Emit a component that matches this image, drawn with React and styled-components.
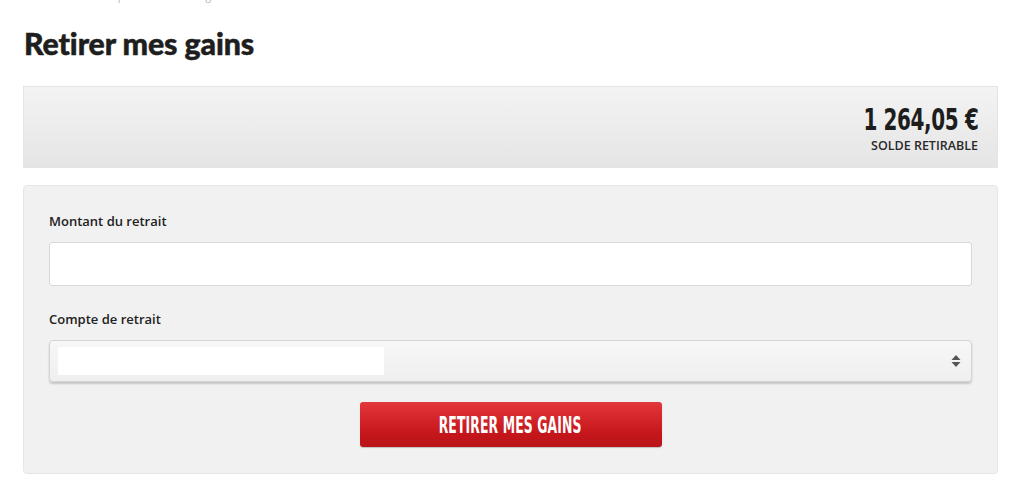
import React from "react";
import styled, { createGlobalStyle } from "styled-components";

const Global = createGlobalStyle`
  html, body { margin: 0; padding: 0; background: #fff; }
  body { font-family: "Open Sans", "Liberation Sans", sans-serif; color: #222; }
`;

const Page = styled.div`
  padding: 0 26px 0 23px;
  display: flex;
  flex-direction: column;
`;

const Crumb = styled.div`
  height: 14px;
  margin-top: -11px;
  overflow: hidden;
  font-size: 11px;
  color: #bbb;
  line-height: 14px;
  padding-left: 2px;
  white-space: nowrap;
`;

const Title = styled.h1`
  margin: 22px 0 0 1px;
  font-family: "Lato", "Liberation Sans", sans-serif;
  font-weight: 900;
  font-size: 30.3px;
  line-height: 36px;
  color: #1e1e1e;
  letter-spacing: -0.1px;
  -webkit-text-stroke: 0.5px #1e1e1e;
`;

const Balance = styled.div`
  margin-top: 25px;
  border: 1px solid #e4e4e4;
  background: linear-gradient(#f3f3f3, #e5e5e5);
  display: flex;
  flex-direction: column;
  align-items: flex-end;
  padding: 0 19px 0 0;
  box-sizing: border-box;
  height: 82px;
`;

const Amount = styled.div`
  margin-top: 16px;
  font-family: "DejaVu Sans Condensed", "DejaVu Sans", sans-serif;
  font-weight: bold;
  font-size: 30px;
  line-height: 34px;
  color: #1d1d1d;
  transform: scaleX(0.74);
  transform-origin: right center;
  letter-spacing: -0.5px;
  white-space: nowrap;
`;

const AmountLabel = styled.div`
  margin-top: 1px;
  font-size: 12.5px;
  font-weight: 600;
  color: #2a2a2a;
  line-height: 16px;
`;

const Panel = styled.div`
  margin-top: 17px;
  border: 1px solid #e6e6e6;
  border-radius: 4px;
  background: #f1f1f1;
  padding: 26px 25px 26px 25px;
  display: flex;
  flex-direction: column;
  height: 289px;
  box-sizing: border-box;
`;

const Label = styled.label`
  font-size: 13px;
  font-weight: 600;
  color: #222;
  line-height: 18px;
  margin-top: ${(p) => p.$top || 0}px;
`;

const Input = styled.div`
  margin-top: 12px;
  height: 44px;
  box-sizing: border-box;
  background: #fff;
  border: 1px solid #d9d9d9;
  border-radius: 3px;
`;

const Select = styled.div`
  margin-top: 12px;
  height: 42px;
  box-sizing: border-box;
  background: linear-gradient(#f7f7f7, #efefef);
  border: 1px solid #d4d4d4;
  border-radius: 4px;
  box-shadow: 0 2px 2px rgba(0, 0, 0, 0.18);
  display: flex;
  align-items: center;
  justify-content: space-between;
  padding: 0 10px 0 8px;
`;

const Masked = styled.div`
  width: 326px;
  height: 28px;
  background: #fff;
`;

const Arrows = styled.svg`
  width: 10px;
  height: 14px;
`;

const ButtonRow = styled.div`
  display: flex;
  justify-content: center;
  margin-top: 20px;
`;

const Button = styled.button`
  width: 302px;
  height: 45px;
  border: none;
  border-radius: 3px;
  background: linear-gradient(#e4373c, #c4161b 70%, #b91419);
  box-shadow: 0 1px 1px rgba(0, 0, 0, 0.2);
  color: #fff;
  font-family: "DejaVu Sans Condensed", "DejaVu Sans", sans-serif;
  font-weight: bold;
  font-size: 23px;
  padding: 0;
  cursor: pointer;
  display: flex;
  align-items: center;
  justify-content: center;
`;

const ButtonText = styled.span`
  display: inline-block;
  transform: scaleX(0.6);
  white-space: nowrap;
  letter-spacing: 0.2px;
`;

export default function App() {
  return (
    <>
      <Global />
      <Page>
        <Crumb>Accueil · Mon compte · Retirer mes gains</Crumb>
        <Title>Retirer mes gains</Title>
        <Balance>
          <Amount>1 264,05 €</Amount>
          <AmountLabel>SOLDE RETIRABLE</AmountLabel>
        </Balance>
        <Panel>
          <Label>Montant du retrait</Label>
          <Input />
          <Label $top={24}>Compte de retrait</Label>
          <Select>
            <Masked />
            <Arrows viewBox="0 0 10 14">
              <path d="M5 1 L9.5 6 H0.5 Z" fill="#555" />
              <path d="M5 13 L9.5 8 H0.5 Z" fill="#555" />
            </Arrows>
          </Select>
          <ButtonRow>
            <Button>
              <ButtonText>RETIRER MES GAINS</ButtonText>
            </Button>
          </ButtonRow>
        </Panel>
      </Page>
    </>
  );
}
